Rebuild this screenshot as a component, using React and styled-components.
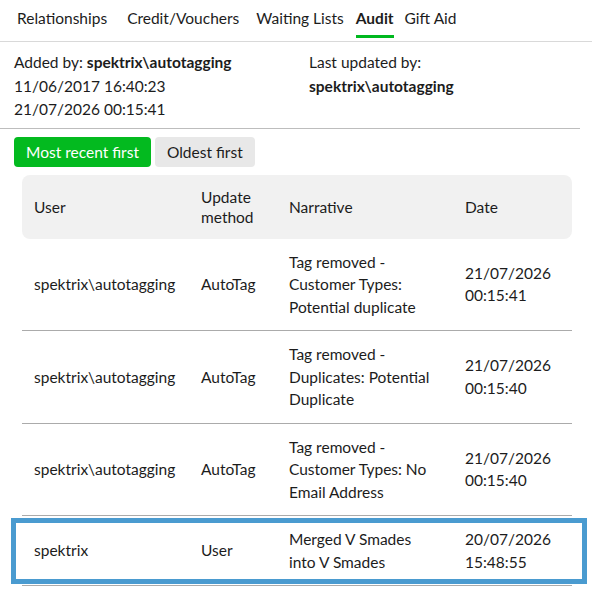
import React from "react";
import styled, { createGlobalStyle } from "styled-components";

const Global = createGlobalStyle`
  body {
    margin: 0;
    background: #fff;
    font-family: "Lato", "Liberation Sans", sans-serif;
    color: #1c1c1c;
  }
`;

const Page = styled.div`
  width: 592px;
  font-size: 15.5px;
`;

const Tabs = styled.nav`
  display: flex;
  padding-left: 17px;
  border-bottom: 1px solid #d9d9d9;
  height: 41px;
`;

const Tab = styled.div`
  margin-right: ${(p) => p.$gap}px;
  line-height: 36px;
  font-weight: ${(p) => (p.$active ? 700 : 400)};
  border-bottom: 3px solid ${(p) => (p.$active ? "#00b81f" : "transparent")};
  height: 38px;
  box-sizing: border-box;
  white-space: nowrap;
`;

const Info = styled.div`
  display: grid;
  grid-template-columns: 295px 1fr;
  padding: 9px 0 6px 14px;
  margin-right: 12px;
  border-bottom: 1px solid #bdbdbd;
  line-height: 23.5px;
`;

const Bold = styled.span`
  font-weight: 700;
`;

const Toggle = styled.div`
  display: flex;
  gap: 4px;
  padding: 8px 0 0 14px;
`;

const ToggleButton = styled.button`
  font: inherit;
  font-size: 15.5px;
  height: 30px;
  padding: 0 12px;
  border: none;
  border-radius: 4px;
  background: ${(p) => (p.$on ? "#03ba1f" : "#e8e8e8")};
  color: ${(p) => (p.$on ? "#fff" : "#1c1c1c")};
`;

const Table = styled.table`
  margin: 8px 0 0 22px;
  width: 550px;
  border-collapse: collapse;
  table-layout: fixed;
`;

const Th = styled.th`
  text-align: left;
  font-weight: 400;
  padding: 12px;
  line-height: 20px;
  height: 40px;
  background: #f1f1f1;
  width: ${(p) => p.$w - 24}px;
  &:first-child {
    border-radius: 8px 0 0 8px;
  }
  &:last-child {
    border-radius: 0 8px 8px 0;
  }
`;

const Row = styled.tr`
  position: relative;
  border-bottom: 1px solid #ababab;
  &::after {
    content: "";
    display: ${(p) => (p.$highlight ? "block" : "none")};
    position: absolute;
    left: -11px;
    right: -15px;
    top: 2px;
    bottom: 1px;
    border: 5px solid #4a9bd0;
    pointer-events: none;
  }
`;

const Td = styled.td`
  padding: 12px;
  line-height: 22.5px;
  vertical-align: middle;
`;

const Line = styled.span`
  display: block;
  white-space: nowrap;
`;

const rows = [
  {
    user: "spektrix\\autotagging",
    method: "AutoTag",
    narrative: ["Tag removed -", "Customer Types:", "Potential duplicate"],
    date: "21/07/2026",
    time: "00:15:41",
  },
  {
    user: "spektrix\\autotagging",
    method: "AutoTag",
    narrative: ["Tag removed -", "Duplicates: Potential", "Duplicate"],
    date: "21/07/2026",
    time: "00:15:40",
  },
  {
    user: "spektrix\\autotagging",
    method: "AutoTag",
    narrative: ["Tag removed -", "Customer Types: No", "Email Address"],
    date: "21/07/2026",
    time: "00:15:40",
  },
  {
    user: "spektrix",
    method: "User",
    narrative: ["Merged V Smades", "into V Smades"],
    date: "20/07/2026",
    time: "15:48:55",
    highlight: true,
  },
];

const tabs = [
  { label: "Relationships", gap: 20 },
  { label: "Credit/Vouchers", gap: 17 },
  { label: "Waiting Lists", gap: 12 },
  { label: "Audit", gap: 11, active: true },
  { label: "Gift Aid", gap: 0 },
];

export default function App() {
  return (
    <Page>
      <Global />
      <Tabs>
        {tabs.map((t) => (
          <Tab key={t.label} $gap={t.gap} $active={t.active}>
            {t.label}
          </Tab>
        ))}
      </Tabs>
      <Info>
        <div>
          Added by: <Bold>spektrix\autotagging</Bold>
          <br />
          11/06/2017 16:40:23
          <br />
          21/07/2026 00:15:41
        </div>
        <div>
          Last updated by:
          <br />
          <Bold>spektrix\autotagging</Bold>
        </div>
      </Info>
      <Toggle>
        <ToggleButton $on>Most recent first</ToggleButton>
        <ToggleButton>Oldest first</ToggleButton>
      </Toggle>
      <Table>
        <thead>
          <tr>
            <Th $w={167}>User</Th>
            <Th $w={88}>Update method</Th>
            <Th $w={176}>Narrative</Th>
            <Th $w={119}>Date</Th>
          </tr>
        </thead>
        <tbody>
          {rows.map((r, i) => (
            <Row key={i} $highlight={r.highlight}>
              <Td>{r.user}</Td>
              <Td>{r.method}</Td>
              <Td>
                {r.narrative.map((l) => (
                  <Line key={l}>{l}</Line>
                ))}
              </Td>
              <Td>
                <Line>{r.date}</Line>
                <Line>{r.time}</Line>
              </Td>
            </Row>
          ))}
        </tbody>
      </Table>
    </Page>
  );
}
